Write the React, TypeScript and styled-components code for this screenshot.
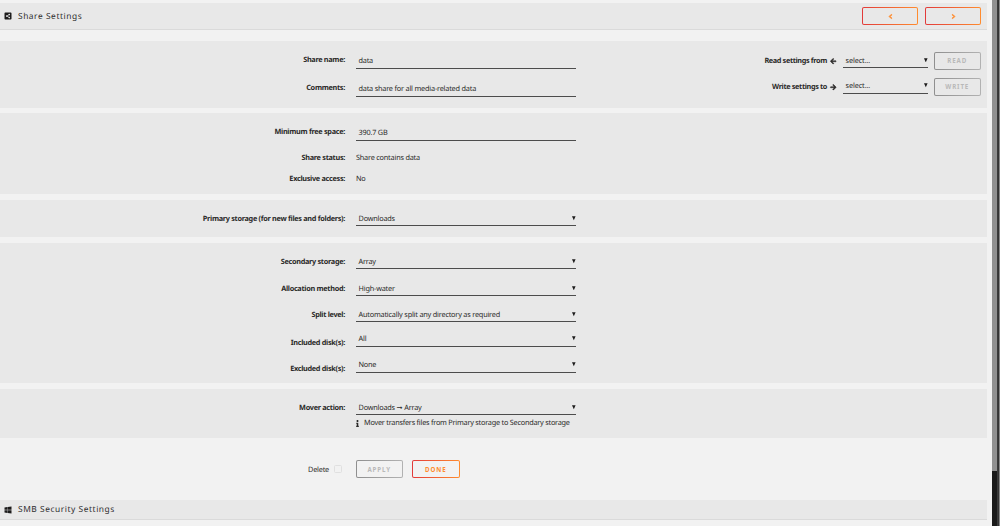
import React from 'react';
import styled, { createGlobalStyle, css } from 'styled-components';
import { FaShareAltSquare, FaWindows, FaArrowLeft, FaArrowRight, FaInfo, FaChevronLeft, FaChevronRight } from 'react-icons/fa';

const GlobalStyle = createGlobalStyle`
  * {
    box-sizing: border-box;
  }

  body {
    margin: 0;
    background: #f2f2f2;
    color: #2b2a29;
    font-family: "Noto Sans", "Open Sans", sans-serif;
    font-size: 7.3px;
    line-height: 14px;
    letter-spacing: -0.2px;
    text-rendering: geometricPrecision;
    overflow: hidden;
  }
`;

interface FieldProps {
  label: string;
  value: string;
  top?: number;
  height?: number;
  // multi-select rows: the label hangs lower and the value sits higher
  multi?: boolean;
  select?: boolean;
}

const Caret = () => (
  <CaretIcon viewBox="0 0 4 5">
    <path d="M0 0.4H4L2 4.8Z" fill="#1c1b1b" />
  </CaretIcon>
);

const Field = ({ label, value, top = 0, height = 15, multi = false, select = false }: FieldProps) => (
  <Row $top={top} $height={height}>
    <Label $drop={multi ? 3 : select ? 0 : -1}>{label}</Label>
    <Control $lift={multi}>
      <span>{value}</span>
      {select && <Caret />}
    </Control>
  </Row>
);

const App = () => {
  return (
    <Page>
      <GlobalStyle />
      <Content>
        <TitleBar $height={27}>
          <FaShareAltSquare size={8} />
          <Title>Share Settings</Title>
          <Pager>
            <Button $wide $tone="orange"><BoldIcon $stroke={90}><FaChevronLeft size={5} /></BoldIcon></Button>
            <Button $wide $tone="orange"><BoldIcon $stroke={90}><FaChevronRight size={5} /></BoldIcon></Button>
          </Pager>
        </TitleBar>

        <Section $top={11} $height={67}>
          <Form>
            <Field label="Share name:" value="data" height={17} />
            <Field label="Comments:" value="data share for all media-related data" height={17} top={11} />
          </Form>
          <Tools>
            <ToolLabel>Read settings from <BoldIcon $stroke={40}><FaArrowLeft size={6.5} /></BoldIcon></ToolLabel>
            <ToolSelect $pad={3}>select...<Caret /></ToolSelect>
            <Button $tone="gray">READ</Button>
            <ToolLabel>Write settings to <BoldIcon $stroke={40}><FaArrowRight size={6.5} /></BoldIcon></ToolLabel>
            <ToolSelect $pad={1.5}>select...<Caret /></ToolSelect>
            <Button $tone="gray">WRITE</Button>
          </Tools>
        </Section>

        <Section $top={5} $height={81}>
          <Form>
            <Field label="Minimum free space:" value="390.7 GB" height={17} />
            <Row $top={9} $height={14}>
              <Label>Share status:</Label>
              <Plain>Share contains data</Plain>
            </Row>
            <Row $top={7} $height={14}>
              <Label>Exclusive access:</Label>
              <Plain>No</Plain>
            </Row>
          </Form>
        </Section>

        <Section $top={6} $height={37}>
          <Form>
            <Field label="Primary storage (for new files and folders):" value="Downloads" select />
          </Form>
        </Section>

        <Section $top={6} $height={140}>
          <Form>
            <Field label="Secondary storage:" value="Array" select />
            <Field label="Allocation method:" value="High-water" top={11.5} select />
            <Field label="Split level:" value="Automatically split any directory as required" top={11.5} select />
            <Field label="Included disk(s):" value="All" top={10} multi select />
            <Field label="Excluded disk(s):" value="None" top={11} multi select />
          </Form>
        </Section>

        <Section $top={6} $height={49}>
          <Form>
            <Field label="Mover action:" value="Downloads ➞ Array" select />
            <Row $top={0} $height={14}>
              <span />
              <Plain>
                <InfoIcon size={7} />
                <Help>Mover transfers files from Primary storage to Secondary storage</Help>
              </Plain>
            </Row>
          </Form>
        </Section>

        <Actions>
          <DeleteLabel><DeleteText>Delete</DeleteText> <CheckBox /></DeleteLabel>
          <Button $tone="gray" $fill="#f2f2f2">APPLY</Button>
          <Button $tone="orange" $fill="#f2f2f2">DONE</Button>
        </Actions>

        <TitleBar $height={20}>
          <FaWindows size={8} />
          <Title>SMB Security Settings</Title>
        </TitleBar>
      </Content>
      <ScrollTrack>
        <ScrollThumb />
      </ScrollTrack>
      <WindowEdge />
    </Page>
  );
};

const Page = styled.div`
  display: flex;
  width: 1000px;
  height: 526px;
  overflow: hidden;
`;

const Content = styled.main`
  width: 992px;
  padding: 3px 5px 0 0;
`;

const TitleBar = styled.header<{ $height: number }>`
  display: flex;
  align-items: center;
  height: ${(p) => p.$height}px;
  padding: 0 6px 0 4px;
  background: #e8e8e8;
  border-bottom: 1px solid #dadada;
  color: #1c1b1b;
`;

const Title = styled.span`
  margin-left: 6px;
  padding-top: 1px;
  font-size: 8.4px;
  letter-spacing: 0.55px;
  color: #2f2f2f;
`;

const Pager = styled.div`
  display: flex;
  gap: 7px;
  margin-left: auto;
`;

const BoldIcon = styled.span<{ $stroke: number }>`
  display: flex;

  svg {
    overflow: visible;
    stroke: currentColor;
    stroke-width: ${(p) => p.$stroke}px;
  }
`;

const Button = styled.button<{ $tone: 'orange' | 'gray'; $wide?: boolean; $fill?: string }>`
  --fill: ${(p) => p.$fill ?? '#e8e8e8'};
  display: flex;
  align-items: center;
  justify-content: center;
  width: ${(p) => (p.$wide ? 56 : 47.5)}px;
  height: 18px;
  padding: 0;
  border: 1px solid transparent;
  border-radius: 2px;
  font: bold 6.2px "Noto Sans", sans-serif;
  letter-spacing: 0.9px;
  ${(p) =>
    p.$tone === 'orange'
      ? css`
          color: #ff8c2f;
          background: linear-gradient(var(--fill), var(--fill)) padding-box,
            linear-gradient(90deg, #e23a3a, #ff8c2f) border-box;
        `
      : css`
          color: #b9b9b9;
          background: linear-gradient(var(--fill), var(--fill)) padding-box,
            linear-gradient(90deg, #8f8f8f, #b2b2b2) border-box;
        `}
`;

const Section = styled.section<{ $top: number; $height: number }>`
  display: flex;
  justify-content: space-between;
  height: ${(p) => p.$height}px;
  margin-top: ${(p) => p.$top}px;
  background: #e8e8e8;
`;

const Form = styled.div`
  padding-top: 11px;
`;

const Row = styled.div<{ $top: number; $height: number }>`
  display: grid;
  grid-template-columns: 345px 220px;
  grid-template-rows: 100%;
  column-gap: 11px;
  height: ${(p) => p.$height}px;
  margin-top: ${(p) => p.$top}px;
`;

const Label = styled.label<{ $drop?: number }>`
  display: flex;
  align-items: center;
  justify-content: flex-end;
  margin: ${(p) => p.$drop ?? 0}px 0 ${(p) => -(p.$drop ?? 0)}px;
  padding-top: 1px;
  font-weight: bold;
  letter-spacing: -0.3px;
  white-space: nowrap;
`;

const Control = styled.div<{ $lift: boolean }>`
  display: flex;
  align-items: center;
  justify-content: space-between;
  padding: ${(p) => (p.$lift ? 0 : 2)}px 0 0 2.5px;
  border-bottom: 1px solid #4c4c4c;
  white-space: nowrap;
`;

const CaretIcon = styled.svg`
  width: 3.6px;
  height: 4.5px;
  margin-bottom: 1px;
`;

const Plain = styled.div`
  display: flex;
  align-items: center;
  padding-top: 2px;
  white-space: nowrap;
`;

const InfoIcon = styled(FaInfo)`
  margin-left: -2.5px;
`;

const Help = styled.span`
  margin-left: 3.5px;
  letter-spacing: -0.23px;
`;

const Tools = styled.div`
  display: grid;
  grid-template-columns: 90px 85px 47.5px;
  grid-template-rows: 18px 18px;
  column-gap: 6px;
  row-gap: 8px;
  padding: 10.5px 6px 0 0;
`;

const ToolLabel = styled.div`
  display: flex;
  align-items: center;
  justify-content: flex-end;
  gap: 3px;
  padding-top: 1px;
  font-weight: bold;
  letter-spacing: -0.36px;
  white-space: nowrap;
`;

const ToolSelect = styled.div<{ $pad: number }>`
  display: flex;
  align-items: center;
  justify-content: space-between;
  height: 16px;
  padding: ${(p) => p.$pad}px 0 0 3px;
  border-bottom: 1px solid #4c4c4c;
  letter-spacing: -0.1px;
`;

const Actions = styled.div`
  display: flex;
  align-items: center;
  gap: 9px;
  height: 62px;
`;

const DeleteLabel = styled.label`
  display: flex;
  align-items: center;
  justify-content: flex-end;
  gap: 5px;
  width: 342px;
  margin-right: 4.5px;
`;

const DeleteText = styled.span`
  padding-top: 1px;
`;

const CheckBox = styled.span`
  width: 8px;
  height: 8px;
  border: 1px solid #e0e0e0;
  border-radius: 1.5px;
`;

const ScrollTrack = styled.div`
  width: 5px;
  height: 526px;
  background: #1a1a1a;
`;

const ScrollThumb = styled.div`
  height: 470.5px;
  background: #909090;
`;

const WindowEdge = styled.div`
  width: 3px;
  height: 526px;
  background: linear-gradient(90deg, #3a3a3a 0 1px, #333 1px 2px, #858585 2px);
`;

export default App;
